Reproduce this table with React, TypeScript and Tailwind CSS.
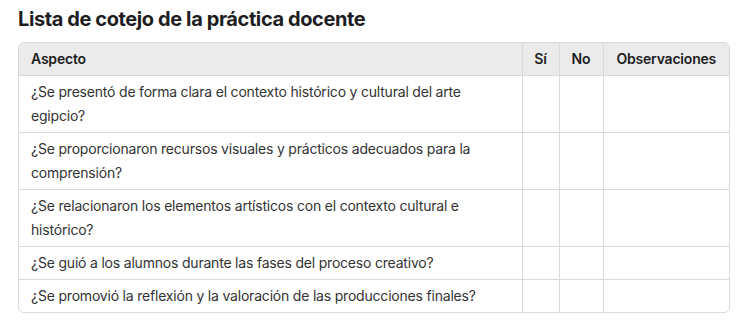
const aspectos = [
  "¿Se presentó de forma clara el contexto histórico y cultural del arte egipcio?",
  "¿Se proporcionaron recursos visuales y prácticos adecuados para la comprensión?",
  "¿Se relacionaron los elementos artísticos con el contexto cultural e histórico?",
  "¿Se guió a los alumnos durante las fases del proceso creativo?",
  "¿Se promovió la reflexión y la valoración de las producciones finales?",
];

export default function App() {
  return (
    <div className="bg-white px-[18px] pt-[6px] font-['Inter',sans-serif] text-[#1d1d1f]">
      <h2 className="text-[20px] font-bold leading-[26px] tracking-[-0.4px]">
        Lista de cotejo de la práctica docente
      </h2>
      {/* checklist table */}
      <div className="mt-[10px] w-[712px] overflow-hidden rounded-md border border-[#d9d9d9]">
        <table className="w-full table-fixed border-collapse text-[14px] leading-6 tracking-[-0.2px]">
          <colgroup>
            <col />
            <col className="w-[37px]" />
            <col className="w-[44px]" />
            <col className="w-[126px]" />
          </colgroup>
          <thead>
            <tr className="bg-[#ebebeb] text-left font-semibold text-[#1d1d1f]">
              <th className="px-3 py-1 font-semibold">Aspecto</th>
              <th className="border-l border-[#d9d9d9] py-1 text-center font-semibold">Sí</th>
              <th className="border-l border-[#d9d9d9] py-1 text-center font-semibold">No</th>
              <th className="border-l border-[#d9d9d9] py-1 text-center font-semibold">Observaciones</th>
            </tr>
          </thead>
          <tbody className="text-[#333333]">
            {aspectos.map((a) => (
              <tr key={a} className="border-t border-[#d9d9d9]">
                <td className="px-3 py-1">{a}</td>
                <td className="border-l border-[#d9d9d9]" />
                <td className="border-l border-[#d9d9d9]" />
                <td className="border-l border-[#d9d9d9]" />
              </tr>
            ))}
          </tbody>
        </table>
      </div>
    </div>
  );
}
